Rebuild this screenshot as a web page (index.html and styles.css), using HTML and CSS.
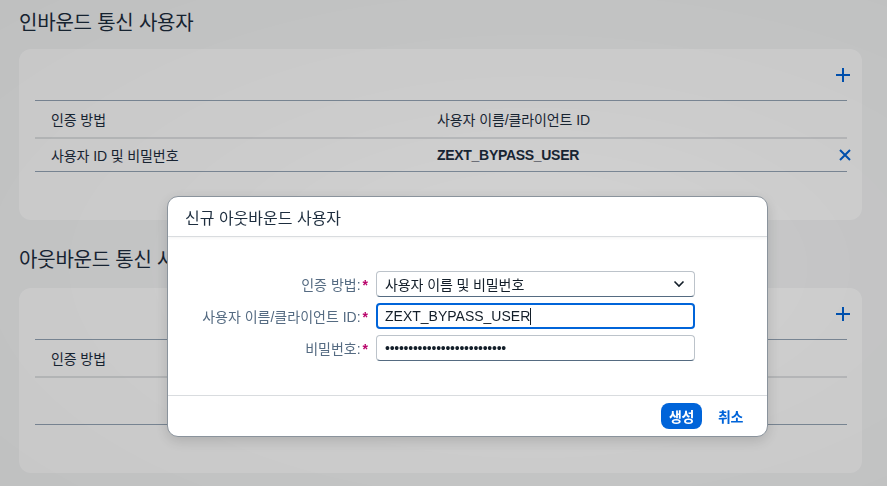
FILE: index.html
```html
<!DOCTYPE html>
<html>
<head>
    <title>통신 사용자</title>
    <link rel="stylesheet" href="styles.css">
</head>
<body>
    <div class="page">
        <h2 class="section-title">인바운드 통신 사용자</h2>
        <div class="card">
            <div class="toolbar">
                <button class="icon-btn" title="추가">
                    <svg width="16" height="16" viewBox="0 0 16 16"><path d="M8 1v14M1 8h14" stroke="currentColor" stroke-width="2" fill="none"/></svg>
                </button>
            </div>
            <table class="grid">
                <thead>
                    <tr><th class="col-method">인증 방법</th><th>사용자 이름/클라이언트 ID</th><th class="col-action"></th></tr>
                </thead>
                <tbody>
                    <tr>
                        <td>사용자 ID 및 비밀번호</td>
                        <td class="strong">ZEXT_BYPASS_USER</td>
                        <td class="col-action">
                            <button class="icon-btn" title="삭제">
                                <svg width="12" height="12" viewBox="0 0 12 12"><path d="M1 1l10 10M11 1L1 11" stroke="currentColor" stroke-width="2" fill="none"/></svg>
                            </button>
                        </td>
                    </tr>
                </tbody>
            </table>
        </div>

        <h2 class="section-title second">아웃바운드 통신 사용자</h2>
        <div class="card">
            <div class="toolbar">
                <button class="icon-btn" title="추가">
                    <svg width="16" height="16" viewBox="0 0 16 16"><path d="M8 1v14M1 8h14" stroke="currentColor" stroke-width="2" fill="none"/></svg>
                </button>
            </div>
            <table class="grid">
                <thead>
                    <tr><th class="col-method">인증 방법</th><th>사용자 이름/클라이언트 ID</th><th class="col-action"></th></tr>
                </thead>
                <tbody>
                    <tr class="empty"><td></td><td></td><td></td></tr>
                </tbody>
            </table>
        </div>
    </div>

    <div class="scrim"></div>

    <div class="dialog">
        <div class="dialog-header">신규 아웃바운드 사용자</div>
        <div class="dialog-body">
            <form class="form">
                <label class="req">인증 방법:</label>
                <div class="field select">
                    <span>사용자 이름 및 비밀번호</span>
                    <svg width="12" height="8" viewBox="0 0 12 8"><path d="M1.5 1.5L6 6l4.5-4.5" stroke="#131e29" stroke-width="1.6" fill="none"/></svg>
                </div>

                <label class="req">사용자 이름/클라이언트 ID:</label>
                <div class="field focused"><span>ZEXT_BYPASS_USER</span><span class="caret"></span></div>

                <label class="req">비밀번호:</label>
                <div class="field"><span class="dots">••••••••••••••••••••••••••</span></div>
            </form>
        </div>
        <div class="dialog-footer">
            <button class="btn primary">생성</button>
            <button class="btn plain">취소</button>
        </div>
    </div>
</body>
</html>
```

FILE: styles.css
```css
body {
    margin: 0;
    background: #f5f6f7;
    font-family: "Liberation Sans", "Noto Sans CJK KR", sans-serif;
    color: #1d2d3e;
    font-size: 14px;
}
.page {
    padding: 0 25px 0 19px;
}
.section-title {
    margin: 0;
    font-size: 20px;
    font-weight: normal;
    line-height: 24px;
    padding: 11px 0 14px;
    letter-spacing: -0.2px;
}
.section-title.second {
    padding: 28px 0 16px;
}
.card {
    background: #fff;
    border-radius: 12px;
    padding: 0 15px 48px 16px;
}
.toolbar {
    height: 51px;
    display: flex;
    align-items: center;
    justify-content: flex-end;
}
.icon-btn {
    background: none;
    border: 0;
    padding: 0;
    color: #0064d9;
    display: inline-flex;
    align-items: center;
    justify-content: center;
    width: 24px;
    height: 24px;
    vertical-align: middle;
}
.toolbar .icon-btn {
    margin-right: -8px;
}
.grid {
    width: 100%;
    border-collapse: collapse;
    border-top: 1px solid #96a6b7;
}
.grid th, .grid td {
    text-align: left;
    padding: 0 16px;
    font-weight: normal;
    letter-spacing: -0.1px;
}
.grid th {
    height: 36px;
    border-bottom: 2px solid #e1e3e5;
}
.grid td {
    height: 32px;
    border-bottom: 1px solid #96a6b7;
}
.grid tr.empty td {
    height: 46px;
}
.col-method {
    width: 354px;
}
.grid .col-action {
    width: 24px;
    padding: 0;
    text-align: right;
}
.grid td.col-action .icon-btn {
    margin-right: -10px;
}
.grid td.strong {
    font-weight: bold;
    letter-spacing: -0.3px;
}

.scrim {
    position: fixed;
    inset: 0;
    background: radial-gradient(ellipse at 60% 55%, rgba(0, 0, 0, 0.17), rgba(0, 0, 0, 0.2) 45%, rgba(0, 0, 0, 0.22));
}

.dialog {
    position: fixed;
    left: 167px;
    top: 196px;
    width: 599px;
    height: 239px;
    background: #fff;
    border: 1px solid #8a939c;
    border-radius: 11px;
    box-shadow: 0 4px 14px rgba(0, 0, 0, 0.15);
    display: flex;
    flex-direction: column;
    overflow: hidden;
}
.dialog-header {
    height: 39px;
    border-bottom: 1px solid #d9dcdf;
    box-shadow: 0 1px 3px rgba(0, 0, 0, 0.05);
    display: flex;
    align-items: center;
    padding-left: 17px;
    font-size: 16px;
    color: #1d2d3e;
}
.dialog-body {
    flex: 1;
    display: flex;
    align-items: center;
}
.form {
    display: grid;
    grid-template-columns: 200px 319px;
    column-gap: 8px;
    row-gap: 6px;
    align-items: center;
}
.form label {
    text-align: right;
    color: #556b82;
}
.form label.req::after {
    content: "*";
    color: #ba066c;
    margin-left: 2px;
    font-weight: bold;
}
.field {
    height: 24px;
    border: 1px solid #bcc3ca;
    border-bottom-color: #556b81;
    border-radius: 4px;
    display: flex;
    align-items: center;
    padding: 0 8px;
    color: #131e29;
}
.field.select {
    justify-content: space-between;
    letter-spacing: -0.1px;
}
.field.select svg {
    margin-right: 1px;
}
.field.focused {
    height: 22px;
    border: 2px solid #0064d9;
    padding: 0 7px;
}
.caret {
    width: 1px;
    height: 17px;
    background: #131e29;
}
.dots {
    font-size: 14px;
    letter-spacing: -0.25px;
    color: #131e29;
}
.dialog-footer {
    height: 40px;
    border-top: 1px solid #d9dcdf;
    display: flex;
    align-items: center;
    justify-content: flex-end;
    gap: 8px;
    padding-right: 16px;
}
.btn {
    font-family: inherit;
    font-size: 14px;
    font-weight: bold;
    height: 26px;
    border-radius: 8px;
    border: 0;
    padding: 0 8px;
    letter-spacing: -0.4px;
}
.btn.primary {
    background: #0064d9;
    color: #fff;
}
.btn.plain {
    background: none;
    color: #0064d9;
}
```
